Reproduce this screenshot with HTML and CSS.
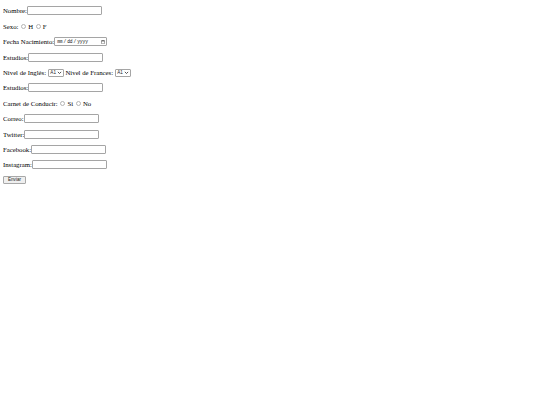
FILE: index.html
```html
<!DOCTYPE html>
<html lang="es">
<head>
  <meta charset="UTF-8">
  <title>Formulario</title>
  <link rel="stylesheet" href="styles.css">
</head>
<body>
  <form class="registro">
    <p>Nombre:<input class="txt" type="text" name="nombre"></p>
    <p>Sexo: <input class="rad" type="radio" name="sexo" value="H"> H <input class="rad" type="radio" name="sexo" value="F"> F</p>
    <p>Fecha Nacimiento:<input class="fecha" type="date" name="fecha"></p>
    <p>Estudios:<input class="txt" type="text" name="estudios"></p>
    <p>Nivel de Inglés: <span class="sel"><select name="ingles"><option>A1</option><option>A2</option><option>B1</option></select><svg viewBox="0 0 6 4"><path d="M1 1 L3 3 L5 1" fill="none" stroke="#333" stroke-width="1"/></svg></span>
       Nivel de Frances: <span class="sel"><select name="frances"><option>A1</option><option>A2</option><option>B1</option></select><svg viewBox="0 0 6 4"><path d="M1 1 L3 3 L5 1" fill="none" stroke="#333" stroke-width="1"/></svg></span></p>
    <p>Estudios:<input class="txt" type="text" name="estudios2"></p>
    <p>Carnet de Conducir: <input class="rad" type="radio" name="carnet" value="si"> Si <input class="rad" type="radio" name="carnet" value="no"> No</p>
    <p>Correo:<input class="txt" type="text" name="correo"></p>
    <p>Twitter:<input class="txt" type="text" name="twitter"></p>
    <p>Facebook:<input class="txt" type="text" name="facebook"></p>
    <p>Instagram:<input class="txt" type="text" name="instagram"></p>
    <input class="btn" type="submit" value="Enviar">
  </form>
</body>
</html>
```

FILE: styles.css
```css
body { margin:0 3px 3px; font:6.75px/9px "Liberation Serif", serif; color:#000; background:#fff; }
p { margin:6.4px 0; height:9px; white-space:nowrap; }

.txt, .fecha, .btn, select {
  box-sizing:border-box; margin:0; vertical-align:top;
  border:1px solid #a5a5a5; border-radius:1px; background:#fff;
}
.txt { width:75px; height:9px; padding:0; }

.fecha {
  width:53px; height:9px; padding:0 1px;
  font:4.6px/7px "Liberation Mono", monospace; color:#222; letter-spacing:-0.1px;
}
.fecha::-webkit-datetime-edit { padding:0; }
.fecha::-webkit-datetime-edit-text { padding:0; }
.fecha::-webkit-calendar-picker-indicator { width:4px; height:4px; padding:0; margin:0; }

.rad {
  appearance:none; -webkit-appearance:none;
  width:5px; height:5px; margin:2.3px 0.6px 0 0.8px; vertical-align:top;
  border:1px solid #b4b4b4; border-radius:50%; background:#fff; box-sizing:border-box;
}

.sel { position:relative; display:inline-block; vertical-align:top; margin-top:1px; }
.sel select {
  appearance:none; -webkit-appearance:none;
  width:16px; height:8px; padding:0 0 0 1.5px;
  font:4.6px/6px "Liberation Sans", sans-serif; color:#222;
}
.sel svg { position:absolute; right:1.5px; top:2.5px; width:5px; height:3.4px; pointer-events:none; }

.btn {
  width:23px; height:8px; padding:0;
  font:4.6px/6px "Liberation Sans", sans-serif; color:#222;
  background:#efefef; border-color:#a8a8a8;
}
```
